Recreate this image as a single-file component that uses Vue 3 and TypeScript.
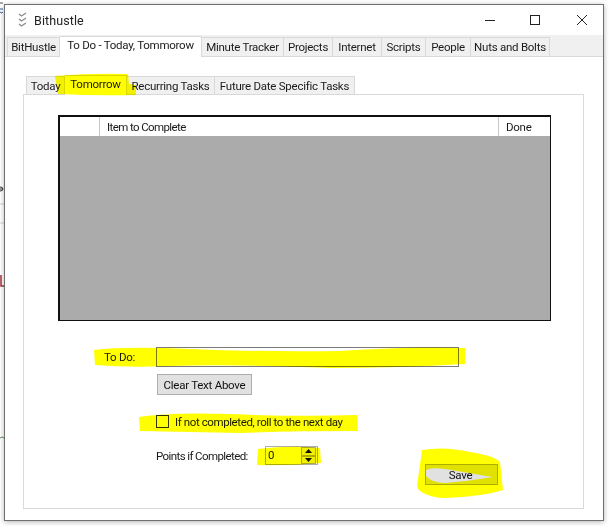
<script setup lang="ts">
const mainTabs = [
  { label: 'BitHustle', width: 53 },
  { label: 'To Do - Today, Tommorow', width: 142, active: true },
  { label: 'Minute Tracker', width: 82 },
  { label: 'Projects', width: 49 },
  { label: 'Internet', width: 49 },
  { label: 'Scripts', width: 44 },
  { label: 'People', width: 45 },
  { label: 'Nuts and Bolts', width: 79 },
]
const subTabs = [
  { label: 'Today', width: 39 },
  { label: 'Tomorrow', width: 62, active: true },
  { label: 'Recurring Tasks', width: 88 },
  { label: 'Future Date Specific Tasks', width: 140 },
]
</script>

<template>
  <div class="desktop">
    <svg class="behind" width="5" height="526" viewBox="0 0 5 526" fill="none">
      <path d="M0 9h3M0 12q2 2 3 0" stroke="#2f5f9a" />
      <path d="M0 3h3" stroke="#555" />
      <path d="M0 187q3 0 3 2t-3 2M0 189h3" stroke="#333" />
      <path d="M0 204h4M0 223h4" stroke="#cfcfcf" />
      <path d="M1 275v11h3" stroke="#a5323c" stroke-width="1.5" />
      <path d="M0 438q2-2 4 0" stroke="#5a8a5a" />
    </svg>
    <div class="window">
      <header class="titlebar">
        <svg class="app-icon" width="10" height="16" viewBox="0 0 10 16" fill="none" stroke="#8a8a8a" stroke-width="1.3">
          <path d="M1 2l2.5 2L8 1M1 7l2.5 2L8 6M1 12l2.5 2L8 11" />
        </svg>
        <span class="title">Bithustle</span>
        <div class="controls">
          <svg width="10" height="10" viewBox="0 0 10 10" class="c-min"><path d="M0 5.5h10" stroke="#222" fill="none" /></svg>
          <svg width="10" height="10" viewBox="0 0 10 10" class="c-max"><rect x="0.5" y="0.5" width="9" height="9" stroke="#222" fill="none" /></svg>
          <svg width="10" height="10" viewBox="0 0 10 10" class="c-close"><path d="M0 0l10 10M10 0L0 10" stroke="#222" fill="none" /></svg>
        </div>
      </header>

      <nav class="main-tabs">
        <div
          v-for="t in mainTabs"
          :key="t.label"
          class="tab"
          :class="{ active: t.active }"
          :style="{ width: t.width + 'px' }"
        >{{ t.label }}</div>
      </nav>

      <section class="main-body">
        <nav class="sub-tabs">
          <div
            v-for="t in subTabs"
            :key="t.label"
            class="tab sub"
            :class="{ active: t.active }"
            :style="{ width: t.width + 'px' }"
          >{{ t.label }}</div>
        </nav>

        <div class="panel">
          <div class="grid">
            <div class="grid-head">
              <div class="cell c1"></div>
              <div class="cell c2">Item to Complete</div>
              <div class="cell c3">Done</div>
            </div>
          </div>

          <div class="row todo-row">
            <label class="todo-label">To Do:</label>
            <div class="textbox"></div>
          </div>

          <button class="btn clear" type="button">Clear Text Above</button>

          <div class="row check-row">
            <span class="checkbox"></span>
            <span class="check-label">If not completed, roll to the next day</span>
          </div>

          <div class="row points-row">
            <span class="points-label">Points if Completed:</span>
            <div class="spinner">
              <span class="spin-value">0</span>
              <div class="spin-btns">
                <span class="spin-btn"><svg width="7" height="4" viewBox="0 0 7 4"><path d="M3.5 0L7 4H0z" fill="#111" /></svg></span>
                <span class="spin-btn"><svg width="7" height="4" viewBox="0 0 7 4"><path d="M0 0h7L3.5 4z" fill="#111" /></svg></span>
              </div>
            </div>
          </div>

          <div class="save-row">
            <button class="btn save" type="button">Save</button>
          </div>
        </div>
      </section>
    </div>

    <svg class="marker" width="611" height="526" viewBox="0 0 611 526">
      <path d="M55 76 Q90 73 128 74 L129 84 L136 85 L136 95 Q100 96 58 94 Z" />
      <path d="M94 350 Q125 346 190 349 Q260 352 340 351 Q410 346 465 348 L465 364 Q400 368 330 368 Q240 364 170 366 Q130 368 95 365 Z" />
      <path d="M139 417 Q170 412 230 414 Q300 417 357 415 L358 431 Q290 431 240 433 Q190 432 140 431 Z" />
      <path d="M258 449 Q290 445 320 448 L321 463 Q290 466 257 465 Z" />
      <path fill-rule="evenodd" d="M422 450 Q445 446 470 452 Q495 456 500 462 L503 490 Q480 497 440 498 Q418 494 417 486 Z M426 470 Q432 467 445 469 Q475 474 493 477 Q470 481 445 483 Q432 483 426 476 Z" />
    </svg>
  </div>
</template>

<style>
html, body { margin: 0; background: #fff; }
</style>

<style scoped>
.desktop {
  position: relative;
  width: 611px;
  height: 526px;
  overflow: hidden;
  background: #fff;
  font-family: Roboto, "Liberation Sans", Arial, sans-serif;
  font-size: 11.5px;
  letter-spacing: -0.25px;
  color: #1a1a1a;
}
.behind { position: absolute; left: 0; top: 0; }

.window {
  position: absolute;
  left: 4px;
  top: 4px;
  width: 598px;
  height: 515px;
  display: flex;
  flex-direction: column;
  background: #fff;
  border: 1px solid #6f6f6f;
  box-shadow: 0 1px 5px rgba(0, 0, 0, 0.3);
}
.titlebar {
  display: flex;
  align-items: center;
  height: 30px;
  flex: none;
  padding-left: 13px;
}
.app-icon { margin-right: 6px; }
.title { font-size: 12.5px; letter-spacing: 0.1px; color: #222; }
.controls {
  margin-left: auto;
  display: flex;
  align-items: center;
  padding-right: 16px;
}
.c-min { margin-right: 35px; }
.c-max { margin-right: 37px; }

.main-tabs {
  display: flex;
  align-items: flex-end;
  flex: none;
  height: 22px;
  padding-left: 2px;
  background: #f0f0f0;
  border-bottom: 1px solid #d9d9d9;
  box-sizing: border-box;
}
.tab {
  box-sizing: border-box;
  height: 19px;
  line-height: 18px;
  text-align: center;
  white-space: nowrap;
  background: #f0f0f0;
  border: 1px solid #d9d9d9;
  border-left-width: 0;
  border-bottom: 0;
}
.tab:first-child { border-left-width: 1px; }
.tab.active {
  position: relative;
  height: 21px;
  background: #fff;
  line-height: 16px;
  margin-bottom: -1px;
}
.main-body {
  flex: 1;
  display: flex;
  flex-direction: column;
  padding: 18px 19px 11px 18px;
  background: #fff;
  min-height: 0;
}
.sub-tabs {
  display: flex;
  align-items: flex-end;
  height: 19px;
  flex: none;
  padding-left: 3px;
}
.tab.sub { height: 18px; line-height: 18px; }
.tab.sub.active { height: 20px; line-height: 17px; margin-bottom: -1px; background: #fff; }

.panel {
  flex: 1;
  min-height: 0;
  box-sizing: border-box;
  border: 1px solid #d9d9d9;
  background: #fff;
  padding: 20px 31px 0 34px;
  display: flex;
  flex-direction: column;
  align-items: flex-start;
}
.grid {
  box-sizing: border-box;
  width: 493px;
  height: 206px;
  flex: none;
  background: #ababab;
  border: 2px solid #111;
  border-bottom-width: 1px;
  border-right-width: 1px;
}
.grid-head {
  display: flex;
  height: 19px;
  background: #fff;
}
.cell {
  box-sizing: border-box;
  line-height: 20px;
  padding-left: 7px;
  border-right: 1px solid #c8c8c8;
}
.c1 { width: 40px; }
.c2 { flex: 1; letter-spacing: -0.6px; }
.c3 { width: 51px; border-right: 0; padding-left: 7px; }

.row { display: flex; align-items: center; }
.todo-row { margin-top: 26px; height: 20px; }
.todo-label { width: 98px; padding-left: 46px; box-sizing: border-box; }
.textbox {
  box-sizing: border-box;
  width: 303px;
  height: 20px;
  background: #fff;
  border: 1px solid #7a7a7a;
}
.btn {
  box-sizing: border-box;
  padding: 0;
  background: #e1e1e1;
  border: 1px solid #adadad;
  font: inherit;
  letter-spacing: inherit;
  color: #111;
}
.clear {
  margin: 7px 0 0 99px;
  width: 95px;
  height: 21px;
}
.check-row { margin: 20px 0 0 98px; height: 13px; }
.check-label { letter-spacing: -0.4px; }
.checkbox {
  box-sizing: border-box;
  width: 13px;
  height: 13px;
  border: 1px solid #333;
  background: #fff;
  margin-right: 6px;
}
.points-row { margin: 18px 0 0 98px; height: 19px; }
.points-label { width: 109px; letter-spacing: -0.6px; }
.spinner {
  box-sizing: border-box;
  width: 53px;
  height: 19px;
  display: flex;
  border: 1px solid #adadad;
  background: #fff;
}
.spin-value { flex: 1; line-height: 17px; padding-left: 2px; }
.spin-btns { width: 15px; display: flex; flex-direction: column; margin-right: 1px; }
.spin-btn {
  flex: 1;
  display: flex;
  align-items: center;
  justify-content: center;
  box-sizing: border-box;
  background: #f0f0f0;
  border: 1px solid #adadad;
}
.save-row { align-self: stretch; display: flex; margin-top: -1px; padding-left: 367px; }
.save { width: 73px; height: 21px; padding-right: 2px; }

.marker {
  position: absolute;
  left: 0;
  top: 0;
  pointer-events: none;
  mix-blend-mode: multiply;
}
.marker path { fill: #ffff00; }
</style>
